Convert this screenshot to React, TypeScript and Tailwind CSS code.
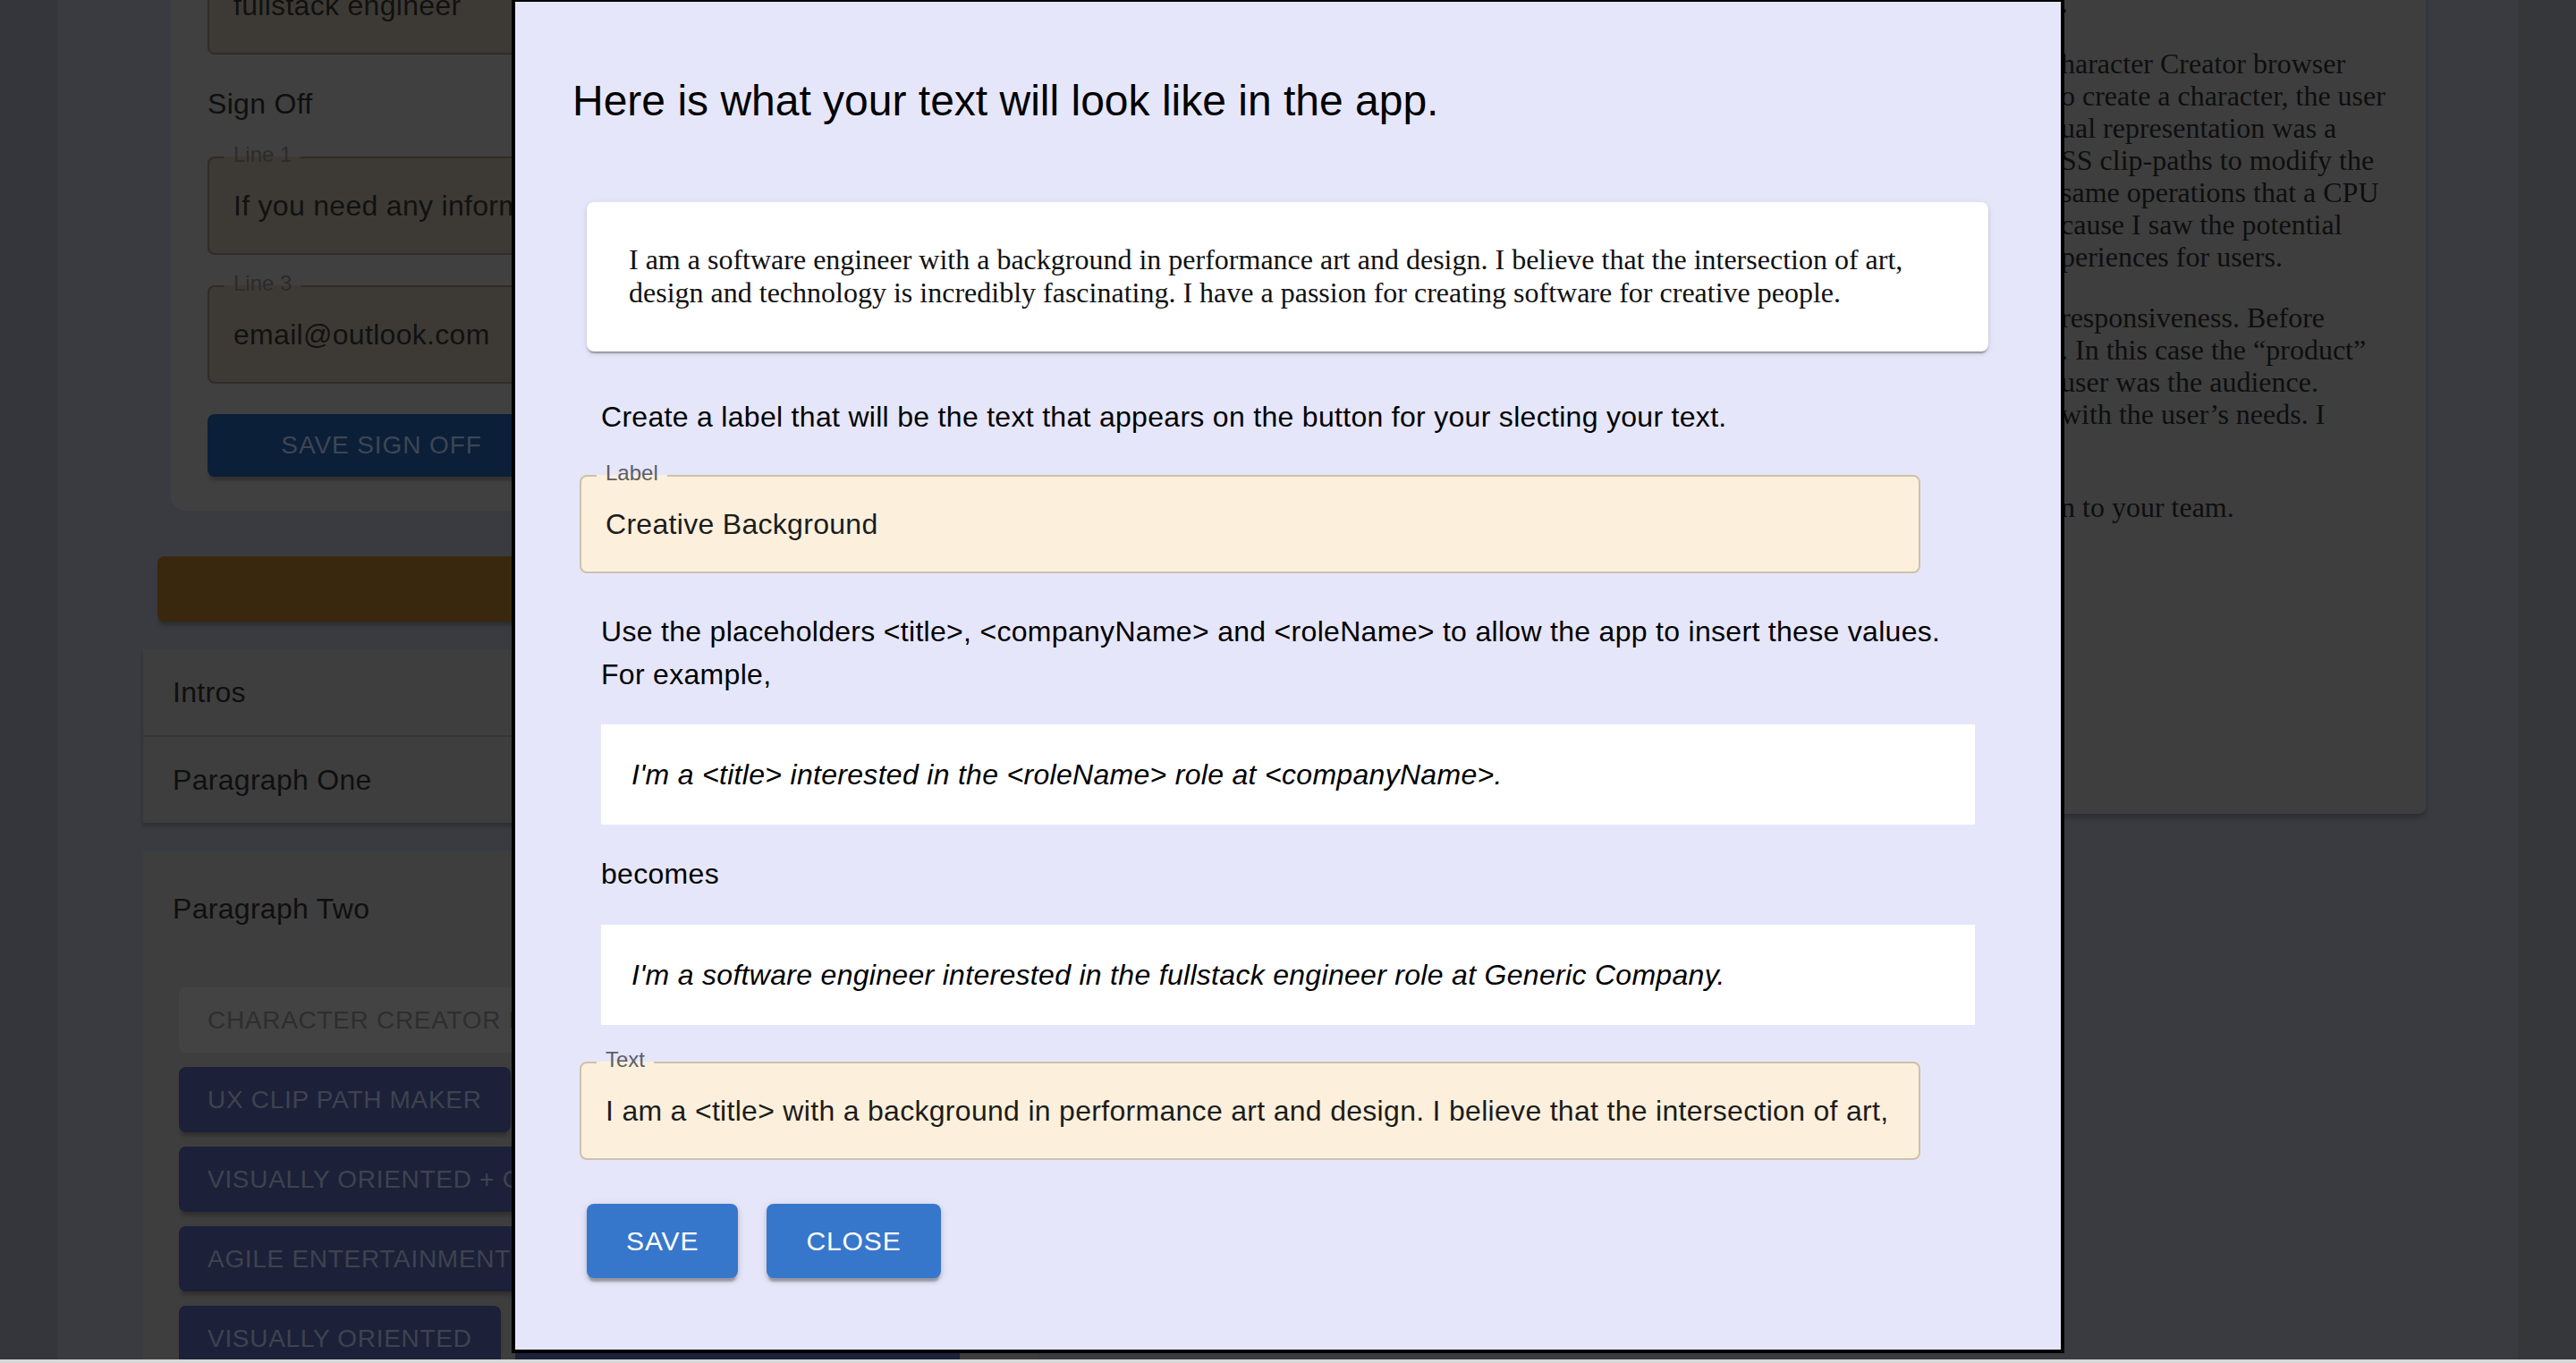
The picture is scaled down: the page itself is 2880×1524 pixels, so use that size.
import React from "react";

type FieldProps = {
  label: string;
  value: string;
  dim?: boolean;
  className?: string;
};

function Field({ label, value, dim, className }: FieldProps) {
  return (
    <fieldset
      className={
        (dim
          ? "border-[#2f2d29] bg-[#3d3a35] "
          : "border-[#cbc2ac] bg-[#fcf0dc] ") +
        "min-w-0 rounded-[8px] border-2 " +
        (className ?? "")
      }
    >
      <legend
        className={
          (dim ? "text-[#2b2b2b] " : "text-[#5d5d66] ") +
          "ml-[17px] h-[18px] px-[10px] text-[24px] leading-[18px]"
        }
      >
        <span className="relative -top-[3px]">{label}</span>
      </legend>
      <div className="flex h-[98px] items-center pb-[8px] pl-[27px] pr-[34px]">
        <input
          readOnly
          value={value}
          className={
            (dim ? "text-[#111111] " : "text-[#1c1c1c] ") +
            "w-full bg-transparent text-[32px] leading-[37px] tracking-[0.3px] outline-none"
          }
        />
      </div>
    </fieldset>
  );
}

function DimButton({ children, disabled }: { children: React.ReactNode; disabled?: boolean }) {
  return (
    <div
      className={
        (disabled
          ? "bg-[#434343] text-[#2e2e2e] "
          : "bg-[#1c2139] text-[#3e4350] shadow-[0_6px_4px_-2px_rgba(0,0,0,0.25)] ") +
        "flex h-[73px] shrink-0 items-center whitespace-nowrap rounded-[8px] px-[32px] text-[28px] tracking-[0.7px]"
      }
    >
      {children}
    </div>
  );
}

function LeftColumn() {
  return (
    <div className="ml-[96px] mt-[-100px] flex w-[1000px] shrink-0 flex-col">
      <section className="ml-[31px] flex flex-col rounded-[16px] bg-[#404040] pb-[38px] pl-[41px] pr-[41px] pt-[43px]">
        <Field dim label="Title" value="fullstack engineer" />
        <h3 className="mt-[37px] text-[32px] leading-[37px] tracking-[0.3px] text-[#0f0f0f]">Sign Off</h3>
        <Field
          dim
          className="mt-[32px]"
          label="Line 1"
          value="If you need any information, please feel free to contact me."
        />
        <Field dim className="mt-[26px]" label="Line 3" value="email@outlook.com" />
        <div className="mt-[34px] flex h-[70px] w-[389px] items-center justify-center rounded-[8px] bg-[#0c1f38] text-[28px] tracking-[0.9px] text-[#3d4654] shadow-[0_6px_4px_-2px_rgba(0,0,0,0.25)]">
          SAVE SIGN OFF
        </div>
      </section>

      <div className="ml-[16px] mt-[51px] h-[73px] rounded-[8px] bg-[#3a280e] shadow-[0_6px_4px_-2px_rgba(0,0,0,0.25)]" />

      <div className="mt-[31px] flex flex-col bg-[#3e3e3e] text-[32px] leading-[37px] tracking-[0.3px] text-[#0f0f0f] shadow-[0_4px_4px_rgba(0,0,0,0.2)]">
        <div className="flex h-[96px] items-center pl-[33px]">Intros</div>
        <div className="flex h-[98px] items-center border-t-2 border-[#363636] pl-[33px]">Paragraph One</div>
      </div>

      <div className="mt-[32px] flex h-[700px] flex-col bg-[#3e3e3e]">
        <div className="flex h-[128px] items-center pl-[33px] text-[32px] leading-[37px] tracking-[0.3px] text-[#0f0f0f]">
          Paragraph Two
        </div>
        <div className="flex flex-col gap-[16px] pl-[40px] pt-[24px]">
          <div className="flex gap-[16px]">
            <DimButton disabled>CHARACTER CREATOR BROWSER GAME</DimButton>
          </div>
          <div className="flex gap-[16px]">
            <DimButton>UX CLIP PATH MAKER</DimButton>
          </div>
          <div className="flex gap-[16px]">
            <DimButton>VISUALLY ORIENTED + CREATIVE</DimButton>
          </div>
          <div className="flex gap-[16px]">
            <DimButton>AGILE ENTERTAINMENT PRODUCTION</DimButton>
          </div>
          <div className="flex gap-[16px]">
            <DimButton>VISUALLY ORIENTED</DimButton>
            <DimButton>FULL STACK WEB DEVELOPER</DimButton>
          </div>
        </div>
      </div>
    </div>
  );
}

function RightCard() {
  return (
    <aside className="ml-auto mr-[103px] mt-[-100px] h-[1010px] w-[452px] shrink-0 whitespace-nowrap rounded-[8px] bg-[#3e3e3e] pl-[44px] pt-[85px] font-['Liberation_Serif',serif] text-[32px] leading-[36px] text-[#0e0e0e] shadow-[0_4px_6px_rgba(0,0,0,0.25)]">
      <p>.</p>
      <p className="mt-[32px]">
        haracter Creator browser
        <br />o create a character, the user
        <br />ual representation was a
        <br />SS clip-paths to modify the
        <br />same operations that a CPU
        <br />cause I saw the potential
        <br />periences for users.
      </p>
      <p className="mt-[32px]">
        responsiveness. Before
        <br />. In this case the “product”
        <br />user was the audience.
        <br />with the user’s needs. I
      </p>
      <p className="mt-[32px]">
        &nbsp;
        <br />n to your team.
      </p>
    </aside>
  );
}

function Modal() {
  const btn =
    "flex h-[83px] items-center rounded-[8px] bg-[#3777cb] px-[44px] text-[30px] font-medium tracking-[0.9px] text-white shadow-[0_6px_2px_-2px_rgba(0,0,0,0.2),0_4px_4px_rgba(0,0,0,0.14),0_2px_10px_rgba(0,0,0,0.12)]";
  return (
    <div className="absolute left-[572px] top-[-2px] flex h-[1515px] w-[1736px] flex-col items-start border-4 border-black bg-[#e6e6fa] text-black">
      <h2 className="ml-[64px] mt-[87px] text-[48px] leading-[48px]">
        Here is what your text will look like in the app.
      </h2>

      <div className="ml-[80px] mt-[89px] w-[1567px] rounded-[8px] bg-white pb-[47px] pl-[47px] pr-[47px] pt-[46px] font-['Liberation_Serif',serif] text-[32px] leading-[37px] text-[#111111] shadow-[0_4px_2px_-2px_rgba(0,0,0,0.2),0_2px_2px_rgba(0,0,0,0.14),0_2px_6px_rgba(0,0,0,0.12)]">
        I am a software engineer with a background in performance art and design. I believe that the
        intersection of art, design and technology is incredibly fascinating. I have a passion for
        creating software for creative people.
      </div>

      <p className="ml-[96px] mt-[49px] text-[32px] leading-[48px] tracking-[0.3px]">
        Create a label that will be the text that appears on the button for your slecting your text.
      </p>

      <Field className="ml-[72px] mt-[33px] w-[1499px]" label="Label" value="Creative Background" />

      <p className="ml-[96px] mt-[41px] text-[32px] leading-[48px] tracking-[0.3px]">
        Use the placeholders &lt;title&gt;, &lt;companyName&gt; and &lt;roleName&gt; to allow the app to insert these
        values.
        <br />
        For example,
      </p>

      <div className="ml-[96px] mt-[32px] flex h-[112px] w-[1536px] items-center bg-white pl-[34px] text-[32px] italic leading-[37px] tracking-[0.3px]">
        I'm a &lt;title&gt; interested in the &lt;roleName&gt; role at &lt;companyName&gt;.
      </div>

      <p className="ml-[96px] mt-[31px] text-[32px] leading-[48px] tracking-[0.3px]">becomes</p>

      <div className="ml-[96px] mt-[33px] flex h-[112px] w-[1536px] items-center bg-white pl-[34px] text-[32px] italic leading-[37px] tracking-[0.3px]">
        I'm a software engineer interested in the fullstack engineer role at Generic Company.
      </div>

      <Field
        className="ml-[72px] mt-[33px] w-[1499px]"
        label="Text"
        value="I am a <title> with a background in performance art and design. I believe that the intersection of art, design and technology is incredibly fascinating. I have a passion for creating software for creative people."
      />

      <div className="ml-[80px] mt-[49px] flex gap-[32px]">
        <button className={btn}>SAVE</button>
        <button className={btn}>CLOSE</button>
      </div>
    </div>
  );
}

export default function App() {
  return (
    <div className="relative flex h-[1524px] w-[2880px] flex-col overflow-hidden font-['Liberation_Sans',Arial,sans-serif]">
      <div className="flex h-[1520px] shrink-0 overflow-hidden">
        <div className="w-[64px] shrink-0 bg-[#35363b]" />
        <main className="flex flex-1 items-start bg-[#3a3b40]">
          <LeftColumn />
          <RightCard />
        </main>
        <div className="w-[65px] shrink-0 bg-[#36373b]" />
      </div>
      <div className="h-[4px] shrink-0 bg-[#d8d8d8]" />
      <Modal />
    </div>
  );
}
